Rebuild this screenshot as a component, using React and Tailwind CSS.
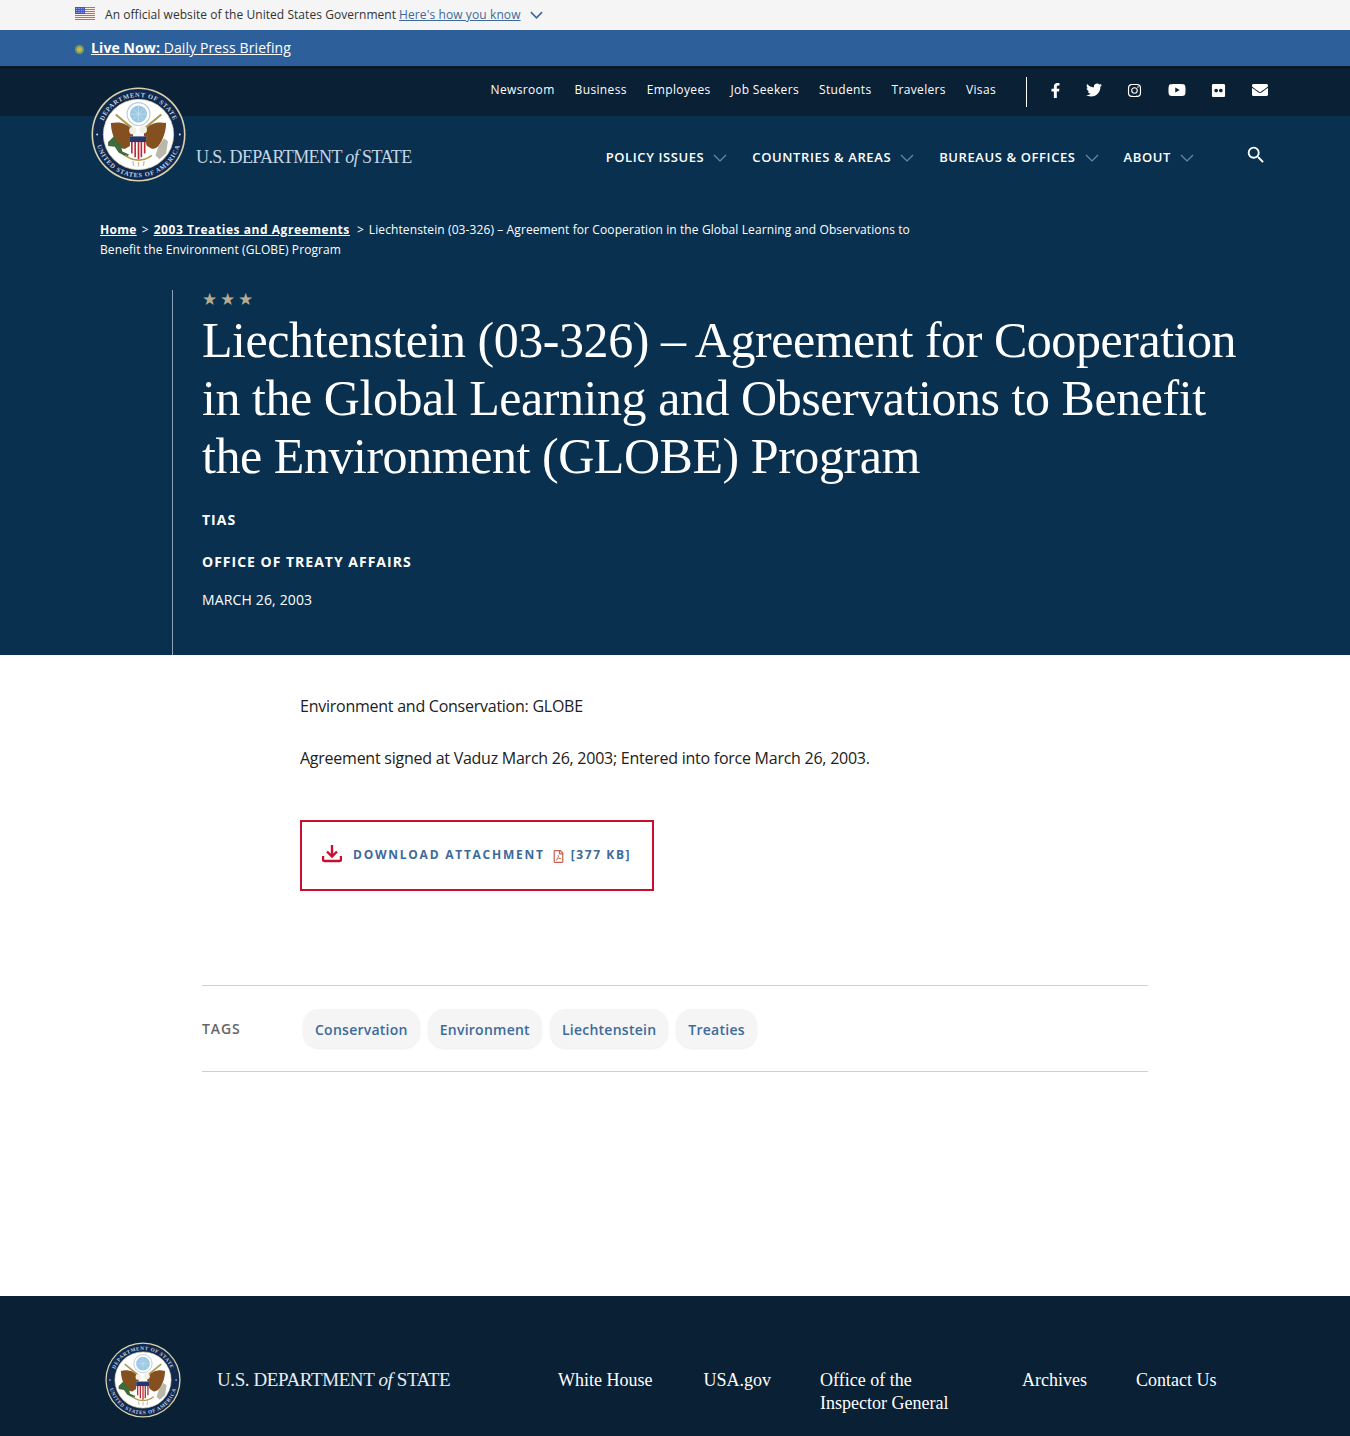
import React from 'react';
import { FaFacebookF, FaTwitter, FaInstagram, FaYoutube, FaFlickr, FaEnvelope, FaRegFilePdf } from 'react-icons/fa';
import { MdSearch } from 'react-icons/md';

const utilityLinks = ['Newsroom', 'Business', 'Employees', 'Job Seekers', 'Students', 'Travelers', 'Visas'];
const mainNav = ['POLICY ISSUES', 'COUNTRIES & AREAS', 'BUREAUS & OFFICES', 'ABOUT'];
const tags = ['Conservation', 'Environment', 'Liechtenstein', 'Treaties'];

const Chevron = ({ className, width = 1.2 }) => (
  <svg viewBox="0 0 14 8" className={className} fill="none" stroke="currentColor" strokeWidth={width}>
    <path d="M1 1l6 6 6-6" />
  </svg>
);

const Flag = () => (
  <svg viewBox="0 0 20 13" className="w-5 h-[13px]">
    <rect width="20" height="13" fill="#fbeee6" />
    {[0, 2, 4, 6, 8, 10, 12].map((y) => (
      <rect key={y} y={y} width="20" height="1" fill="#e2604f" />
    ))}
    <rect width="10" height="7" fill="#4257c4" />
    <path d="M1 1.5h8M1 3.500h8M1 5.500h8" stroke="#d5daf5" strokeWidth="0.7" strokeDasharray="0.8 0.9" />
  </svg>
);

const Seal = ({ id, className }) => (
  <svg viewBox="0 0 100 100" className={className}>
    <defs>
      <path id={id + '-top'} d="M10.500 50a39.500 39.500 0 0 1 79 0" />
      <path id={id + '-bottom'} d="M5 50a45 45 0 0 0 90 0" />
    </defs>
    <circle cx="50" cy="50" r="49.500" fill="#d9d3ae" />
    <circle cx="50" cy="50" r="47.800" fill="#10294c" />
    <circle cx="50" cy="50" r="37" fill="#fff" stroke="#d9d3ae" strokeWidth="0.800" />
    <text fill="#c9d4e4" fontSize="6.800" fontWeight="bold" fontFamily="'Liberation Serif', serif" letterSpacing="0.7">
      <textPath href={'#' + id + '-top'} startOffset="50%" textAnchor="middle">DEPARTMENT OF STATE</textPath>
    </text>
    <text fill="#c9d4e4" fontSize="6.800" fontWeight="bold" fontFamily="'Liberation Serif', serif" letterSpacing="0.8">
      <textPath href={'#' + id + '-bottom'} startOffset="50%" textAnchor="middle">UNITED STATES OF AMERICA</textPath>
    </text>
    <circle cx="6.500" cy="50" r="1" fill="#dfe6f0" />
    <circle cx="93.500" cy="50" r="1" fill="#dfe6f0" />
    {/* glory */}
    <circle cx="50" cy="28.500" r="12" fill="#fff" stroke="#b9cbd8" strokeWidth="1.200" />
    <circle cx="50" cy="28.500" r="9" fill="#9cc8e4" />
    <path d="M42 28.500h16M50 20.500v16M44.500 23l11 11M55.500 23l-11 11" stroke="#c9e2f1" strokeWidth="0.700" />
    {/* arrows behind wings */}
    <path d="M26 29l17 14M74 29L57 43" stroke="#a99a55" strokeWidth="2.200" />
    {/* wings */}
    <path d="M21 38c9-2 17 0 23 8 1 6 0 12-3 16l-5 3c-3 0-5-1-7-3-5-6-8-16-8-24z" fill="#84501f" />
    <path d="M79 38c-9-2-17 0-23 8-1 6 0 12 3 16l5 3c3 0 5-1 7-3 5-6 8-16 8-24z" fill="#84501f" />
    {/* head */}
    <circle cx="44" cy="46" r="3.800" fill="#f2efe3" />
    <circle cx="55" cy="45" r="4" fill="#f2efe3" />
    {/* shield */}
    <path d="M41 52h17v14c0 6-4 9-8.500 11-4.500-2-8.500-5-8.500-11z" fill="#fff" />
    <path d="M41 52h17v6H41z" fill="#23386d" />
    <path d="M43 58v12M46.500 58v16M50 58v18M53 58v16M56.500 58v12" stroke="#b42a35" strokeWidth="1.700" />
    {/* olive + arrows in talons */}
    <path d="M18 58l6-6 4 6 3 2 2 8 7 3-2 3-9-5-4-6-7-1z" fill="#3e6b3a" />
    <path d="M71 62l6-8 4 3-2 13-7 6-4-4z" fill="#bab8a8" />
    <path d="M36 72c4 3 8 5 14 5s10-2 14-5" stroke="#b09c4c" strokeWidth="1.800" fill="none" />
    <path d="M44 78l1 5M50 79v5M56 78l-1 5" stroke="#c8c3b0" strokeWidth="1.500" />
  </svg>
);

const Wordmark = ({ className }) => (
  <span className={"font-['Liberation_Serif',serif] whitespace-nowrap " + className}>
    U.S. DEPARTMENT <i className="lowercase">of</i> STATE
  </span>
);

const DownloadIcon = () => (
  <svg viewBox="0 0 20 18" className="w-5 h-[18px]" fill="none" stroke="#c8102e" strokeWidth="2.400">
    <path d="M10 0v11M5 6.500l5 5 5-5" />
    <path d="M1 11v3.500c0 1 .6 1.500 1.500 1.500h15c.9 0 1.500-.5 1.500-1.500V11" />
  </svg>
);

export default function App() {
  return (
    <div className="font-['Open_Sans',sans-serif] bg-white text-[#212121] min-h-[1436px] relative">
      {/* Gov banner */}
      <div className="h-[30px] bg-[#f5f5f5] flex items-center pl-[75px] text-[12px] tracking-[0.05px] text-[#333]">
        <span className="-mt-[3px] flex"><Flag /></span>
        <span className="ml-[10px]">An official website of the United States Government</span>
        <a className="ml-[3px] text-[#3d6a9b] underline tracking-[0.1px]">Here's how you know</a>
        <Chevron className="ml-[9px] w-[13px] h-[8px] text-[#3d6a9b]" width={1.8} />
      </div>

      {/* Live bar */}
      <div className="h-[36px] bg-[#2d5f9a] flex items-center pl-[75px] text-white text-[14px] tracking-[0.1px]">
        <span className="w-[9px] h-[9px] rounded-full bg-[#c3b94d] border-2 border-[#7d9a5c] mt-[3px]"></span>
        <a className="ml-[7px] underline -mt-[1px]"><b>Live Now:</b> Daily Press Briefing</a>
      </div>

      {/* Utility nav */}
      <div className="h-[50px] bg-[#0a2035] border-t-[3px] border-[#081a2c] flex items-center justify-end text-white">
        <nav className="flex gap-[20px] text-[12px] tracking-[0.35px] -mt-[5px]">
          {utilityLinks.map((link) => (
            <a key={link}>{link}</a>
          ))}
        </nav>
        <div className="ml-[30px] w-px h-[30px] bg-white -mt-[2px]"></div>
        <div className="ml-[13px] mr-[82px] w-[228px] flex items-center justify-between -mt-[5px] text-[15px]">
          <FaFacebookF className="ml-[8px]" />
          <FaTwitter className="text-[16px] -ml-[3px]" />
          <FaInstagram />
          <FaYoutube className="text-[18px]" />
          <FaFlickr />
          <FaEnvelope className="text-[16px]" />
        </div>
      </div>

      {/* Hero */}
      <div className="h-[539px] bg-[#0a304f] text-white relative">
        <Seal id="seal-head" className="absolute left-[91px] -top-[29px] w-[95px] h-[95px]" />
        <Wordmark className="absolute left-[196px] top-[28px] text-[18px] text-[#c5d7e6] tracking-[-0.6px]" />

        <nav className="flex items-center justify-end h-[80px] pr-[86px] text-[13px] font-semibold tracking-[0.6px]">
          {mainNav.map((item) => (
            <div key={item} className="flex items-center mr-[25px] last:mr-[53px] pt-[3px]">
              <span>{item}</span>
              <Chevron className="ml-[9px] w-[14px] h-[8px] text-[#6d8aa5]" />
            </div>
          ))}
          <span className="ml-[26px] flex"><MdSearch className="text-[22px] -mt-[3px] -mr-[3px]" /></span>
        </nav>

        <div className="ml-[100px] w-[830px] text-[12px] leading-[20px] mt-[24px] tracking-[0.1px]">
          <a className="font-bold underline tracking-[0.3px]">Home</a>
          <span className="mx-[5px]">&gt;</span>
          <a className="font-bold underline tracking-[0.55px]">2003 Treaties and Agreements</a>
          <span className="ml-[7px] mr-[5px]">&gt;</span>
          <span>Liechtenstein (03-326) – Agreement for Cooperation in the Global Learning and Observations to Benefit the Environment (GLOBE) Program</span>
        </div>

        <div className="ml-[172px] mt-[30px] h-[365px] border-l border-[#8fa3b5] pl-[29px]">
          <div className="flex gap-[3px] text-[#b5ab90] text-[17px] leading-[18px]">
            <span>★</span><span>★</span><span>★</span>
          </div>
          <h1 className="font-['Liberation_Serif',serif] text-[50px] leading-[58px] mt-[3px] tracking-[-0.45px] w-[1045px]">
            Liechtenstein (03-326) – Agreement for Cooperation in the Global Learning and Observations to Benefit the Environment (GLOBE) Program
          </h1>
          <div className="mt-[25px] text-[14px] font-bold tracking-[1px] leading-[20px]">TIAS</div>
          <div className="mt-[22px] text-[14px] font-bold tracking-[1px] leading-[20px]">OFFICE OF TREATY AFFAIRS</div>
          <div className="mt-[18px] text-[14px] leading-[20px] tracking-[0.15px]">MARCH 26, 2003</div>
        </div>
      </div>

      {/* Body */}
      <div className="pl-[300px] pt-[39px] text-[16px] leading-[24px] tracking-[-0.25px]">
        <p>Environment and Conservation: GLOBE</p>
        <p className="mt-[28px]">Agreement signed at Vaduz March 26, 2003; Entered into force March 26, 2003.</p>
        <a className="mt-[50px] w-[354px] h-[71px] border-2 border-[#c8102e] flex items-center pl-[20px] text-[12px] font-bold tracking-[1.75px] text-[#3d6a9b]">
          <span className="-mt-[4px] flex"><DownloadIcon /></span>
          <span className="ml-[11px] -mt-[2px]">DOWNLOAD ATTACHMENT</span>
          <FaRegFilePdf className="ml-[7px] text-[#c8604f] text-[13px] mt-[1px]" />
          <span className="ml-[6px] tracking-[1.6px] -mt-[2px]">[377 KB]</span>
        </a>
      </div>

      {/* Tags */}
      <div className="mt-[94px] mx-[202px] h-[87px] border-y border-[#cfcfcf] flex items-center">
        <span className="w-[101px] text-[14px] font-semibold tracking-[0.9px] text-[#666]">TAGS</span>
        <div className="flex gap-2">
          {tags.map((tag) => (
            <a key={tag} className="h-[39px] px-[12px] pt-[1px] flex items-center rounded-[16px] bg-[#f5f5f5] shadow-[0_1px_2px_rgba(0,0,0,0.08)] text-[14px] font-semibold tracking-[0.25px] text-[#3d6a9b]">
              {tag}
            </a>
          ))}
        </div>
      </div>

      {/* Footer */}
      <footer className="mt-[224px] h-[140px] bg-[#0a2035] text-white relative flex items-start pt-[73px] font-['Liberation_Serif',serif] text-[18px] leading-[23px]">
        <Seal id="seal-foot" className="absolute left-[105px] top-[46px] w-[76px] h-[76px]" />
        <Wordmark className="absolute left-[217px] top-[72px] text-[19px] leading-[23px] text-[#e6eef5] tracking-[-0.4px]" />
        <a className="ml-[558px]">White House</a>
        <a className="ml-[51px]">USA.gov</a>
        <a className="ml-[49px] w-[150px]">Office of the Inspector General</a>
        <a className="ml-[52px]">Archives</a>
        <a className="ml-[49px]">Contact Us</a>
      </footer>
    </div>
  );
}
